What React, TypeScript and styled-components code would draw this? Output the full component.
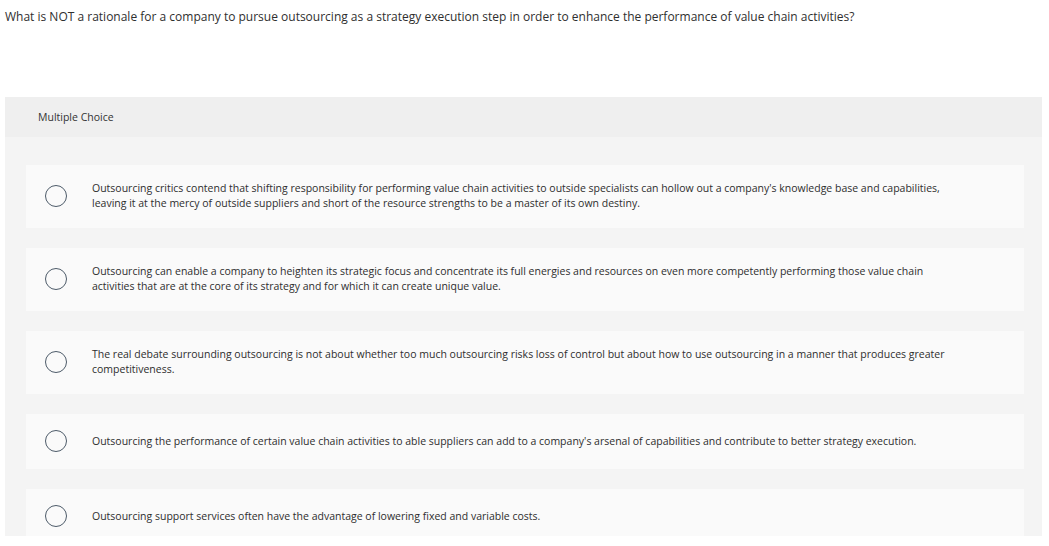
import React from 'react';
import styled, { createGlobalStyle } from 'styled-components';

const GlobalStyle = createGlobalStyle`
    html, body {
        margin: 0;
        padding: 0;
        background: #ffffff;
    }
    body {
        font-family: 'Open Sans', 'Liberation Sans', sans-serif;
        color: #333333;
    }
`;

const Page = styled.div`
    width: 1049px;
    height: 546px;
    overflow: hidden;
    padding: 9px 7px 0 5px;
    box-sizing: border-box;
`;

const Question = styled.p`
    margin: 0;
    font-size: 12px;
    line-height: 15px;
    color: #2f2f2f;
    height: 88px;
`;

const Panel = styled.section`
    background: #f4f4f4;
    height: 439px;
    overflow: hidden;
`;

const PanelHeader = styled.div`
    background: #efefef;
    height: 40px;
    display: flex;
    align-items: center;
    padding-left: 33px;
    font-size: 10.5px;
    color: #333333;
`;

const ChoiceList = styled.div`
    display: flex;
    flex-direction: column;
    gap: 20px;
    padding: 28px 18px 0 21px;
`;

const Choice = styled.label`
    display: flex;
    align-items: center;
    background: #fafafa;
    padding: 16px 70px 17px 19px;
    cursor: pointer;
`;

const Radio = styled.span`
    flex: none;
    width: 20px;
    height: 20px;
    border: 1.5px solid #4d5b69;
    border-radius: 50%;
    margin-right: 25px;
`;

const ChoiceText = styled.span`
    font-size: 10.5px;
    line-height: 15px;
    color: #2e2e2e;
`;

const choices = [
    "Outsourcing critics contend that shifting responsibility for performing value chain activities to outside specialists can hollow out a company's knowledge base and capabilities, leaving it at the mercy of outside suppliers and short of the resource strengths to be a master of its own destiny.",
    'Outsourcing can enable a company to heighten its strategic focus and concentrate its full energies and resources on even more competently performing those value chain activities that are at the core of its strategy and for which it can create unique value.',
    'The real debate surrounding outsourcing is not about whether too much outsourcing risks loss of control but about how to use outsourcing in a manner that produces greater competitiveness.',
    "Outsourcing the performance of certain value chain activities to able suppliers can add to a company's arsenal of capabilities and contribute to better strategy execution.",
    'Outsourcing support services often have the advantage of lowering fixed and variable costs.',
];

const App = (): JSX.Element => {
    return (
        <>
            <GlobalStyle />
            <Page>
                <Question>
                    What is NOT a rationale for a company to pursue outsourcing as a strategy
                    execution step in order to enhance the performance of value chain activities?
                </Question>
                <Panel>
                    <PanelHeader>Multiple Choice</PanelHeader>
                    <ChoiceList>
                        {choices.map((text) => (
                            <Choice key={text}>
                                <Radio />
                                <ChoiceText>{text}</ChoiceText>
                            </Choice>
                        ))}
                    </ChoiceList>
                </Panel>
            </Page>
        </>
    );
};

export default App;
